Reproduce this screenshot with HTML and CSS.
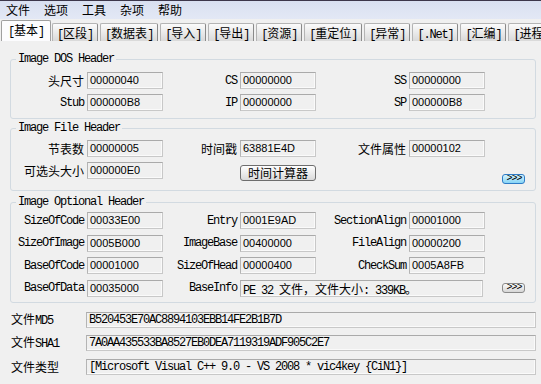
FILE: index.html
```html
<!DOCTYPE html>
<html>
<head>
<meta charset="utf-8">
<link rel="stylesheet" href="styles.css">
</head>
<body>
<div class="menubar">
  <span>文件</span><span>选项</span><span>工具</span><span>杂项</span><span>帮助</span>
</div>
<div class="tabs">
  <div class="tab sel"><span class="m">[</span>基本<span class="m">]</span></div>
  <div class="tab"><span class="m">[</span>区段<span class="m">]</span></div>
  <div class="tab"><span class="m">[</span>数据表<span class="m">]</span></div>
  <div class="tab"><span class="m">[</span>导入<span class="m">]</span></div>
  <div class="tab"><span class="m">[</span>导出<span class="m">]</span></div>
  <div class="tab"><span class="m">[</span>资源<span class="m">]</span></div>
  <div class="tab"><span class="m">[</span>重定位<span class="m">]</span></div>
  <div class="tab"><span class="m">[</span>异常<span class="m">]</span></div>
  <div class="tab"><span class="m">[.Net]</span></div>
  <div class="tab"><span class="m">[</span>汇编<span class="m">]</span></div>
  <div class="tab"><span class="m">[</span>进程</div>
</div>
<div class="main">
  <fieldset class="grp g1">
    <legend class="m">Image DOS Header</legend>
    <div class="grid">
      <label>头尺寸</label><div class="f">00000040</div>
      <label class="m">CS</label><div class="f">00000000</div>
      <label class="m">SS</label><div class="f">00000000</div>
      <span></span>
      <label class="m">Stub</label><div class="f">000000B8</div>
      <label class="m">IP</label><div class="f">00000000</div>
      <label class="m">SP</label><div class="f">000000B8</div>
    </div>
  </fieldset>
  <fieldset class="grp g2">
    <legend class="m">Image File Header</legend>
    <div class="grid">
      <label>节表数</label><div class="f">00000005</div>
      <label>时间戳</label><div class="f">63881E4D</div>
      <label>文件属性</label><div class="f">00000102</div>
      <span></span>
      <label>可选头大小</label><div class="f">000000E0</div>
      <span></span><button class="calc">时间计算器</button>
      <span></span><span></span>
      <button class="more blue"><span class="mb">&gt;&gt;&gt;</span></button>
    </div>
  </fieldset>
  <fieldset class="grp g3">
    <legend class="m">Image Optional Header</legend>
    <div class="grid">
      <label class="m">SizeOfCode</label><div class="f">00033E00</div>
      <label class="m">Entry</label><div class="f">0001E9AD</div>
      <label class="m">SectionAlign</label><div class="f">00001000</div>
      <span></span>
      <label class="m">SizeOfImage</label><div class="f">0005B000</div>
      <label class="m">ImageBase</label><div class="f">00400000</div>
      <label class="m">FileAlign</label><div class="f">00000200</div>
      <span></span>
      <label class="m">BaseOfCode</label><div class="f">00001000</div>
      <label class="m">SizeOfHead</label><div class="f">00000400</div>
      <label class="m">CheckSum</label><div class="f">0005A8FB</div>
      <span></span>
      <label class="m">BaseOfData</label><div class="f">00035000</div>
      <label class="m">BaseInfo</label><div class="f wide"><span class="m">PE 32 </span>文件，文件大小<span class="m">: 339KB</span>。</div>
      <button class="more gray"><span class="mb">&gt;&gt;&gt;</span></button>
    </div>
  </fieldset>
  <div class="hashes">
    <label class="hl">文件<span class="m">MD5</span></label><div class="f fm">B520453E70AC8894103EBB14FE2B1B7D</div>
    <label class="hl">文件<span class="m">SHA1</span></label><div class="f fm">7A0AA435533BA8527EB0DEA7119319ADF905C2E7</div>
    <label class="hl">文件类型</label><div class="f fm">[Microsoft Visual C++ 9.0 - VS 2008 * vic4key {CiN1}]</div>
  </div>
</div>
</body>
</html>
```
FILE: styles.css
```css
* { box-sizing: border-box; }
body {
  margin: 0;
  width: 541px;
  height: 384px;
  overflow: hidden;
  background: #f0f0f0;
  color: #000;
  font: 12px/16px "Noto Sans CJK SC", sans-serif;
}
.m {
  font-family: "Liberation Mono", monospace;
  font-size: 12px;
  letter-spacing: -1.2px;
}
.menubar {
  height: 19px;
  border-top: 1px solid #3d374b;
  background: linear-gradient(#d9e0f1, #e3e8f5);
  display: flex;
  gap: 14px;
  padding-left: 6px;
  line-height: 18px;
}
.tabs {
  height: 22px;
  display: flex;
  align-items: flex-end;
  padding-left: 4px;
  gap: 2px;
  overflow: hidden;
}
.tab {
  flex: none;
  height: 18px;
  padding: 1px 4px 0;
  border: 1px solid #b4b4b4;
  border-right-color: #8a8a8a;
  border-bottom: none;
  border-radius: 2px 2px 0 0;
  background: linear-gradient(#fbfbfb, #d9d9d9);
  line-height: 16px;
  white-space: nowrap;
}
.tab.sel {
  height: 21px;
  margin: 0 -1px 0 -3px;
  padding: 0 6px;
  background: #fcfcfe;
  border-color: #a0a0a0;
  line-height: 18px;
}
.main {
  padding: 11px 5px 0 10px;
}
fieldset.grp {
  margin: 0;
  padding: 0;
  min-width: 0;
  border: 1px solid #d2dae1;
  border-radius: 3px;
}
.grp legend {
  margin-left: 5px;
  padding: 0 2px;
  line-height: 14px;
}
.grid {
  display: grid;
  grid-template-columns: 73px 76px 71px 76px 87px 76px 40px;
  column-gap: 3px;
  row-gap: 5px;
  grid-auto-rows: 17px;
  align-items: center;
}
.grid label {
  text-align: right;
  white-space: nowrap;
}
fieldset.g1 { padding-bottom: 7px; }
.g1 .grid { padding-top: 6px; }
fieldset.g2 { margin-top: 2px; padding-bottom: 11px; }
.g2 .grid { padding-top: 5px; }
fieldset.g3 { margin-top: 4px; padding-bottom: 5px; }
.g3 .grid { padding-top: 3px; row-gap: 5.67px; }
.f {
  height: 17px;
  padding-left: 2px;
  border: 1px solid #c8c8c8;
  border-top-color: #aaaaaa;
  border-left-color: #b4b4b4;
  box-shadow: inset -1px -1px 0 #fafafa;
  background: #f0f0f0;
  font: 11px/15px "Liberation Sans", sans-serif;
  white-space: nowrap;
  overflow: hidden;
}
.f.wide {
  grid-column: 4 / span 3;
  margin-right: 2px;
  font: 12px/15px "Noto Sans CJK SC", sans-serif;
}
.calc {
  grid-column: 4;
  align-self: start;
  margin: 3px 0 0;
  height: 16px;
  padding: 0;
  border: 1px solid #6e6e6e;
  border-radius: 3px;
  background: linear-gradient(#fefefe, #dadada);
  font: 12px/14px "Noto Sans CJK SC", sans-serif;
  color: #000;
}
.more {
  align-self: start;
  justify-self: start;
  display: flex;
  align-items: center;
  justify-content: center;
  width: 23px;
  height: 10px;
  margin: 0 0 0 14px;
  padding: 0;
  border-radius: 3px;
  color: #000;
  overflow: hidden;
}
.mb {
  font: 10px/8px "Liberation Mono", monospace;
  letter-spacing: -1px;
  margin-right: -1px;
}
.more.blue {
  grid-column: 7;
  margin-top: 12px;
  border: 1px solid #2f7cc6;
  background: linear-gradient(#d6f4ff, #86d4f6);
}
.more.gray {
  margin-top: 3px;
  border: 1px solid #8a8a8a;
  background: linear-gradient(#fbfbfb, #d6d6d6);
}
.hashes {
  margin-top: 9px;
  padding-left: 1px;
  display: grid;
  grid-template-columns: 72px 1fr;
  column-gap: 3px;
  row-gap: 7.5px;
  grid-auto-rows: 16px;
  align-items: center;
}
.hl { white-space: nowrap; }
.f.fm {
  height: 16px;
  line-height: 14px;
  padding-left: 2px;
  font-family: "Liberation Mono", monospace;
  font-size: 12px;
  letter-spacing: -1.2px;
}
```
